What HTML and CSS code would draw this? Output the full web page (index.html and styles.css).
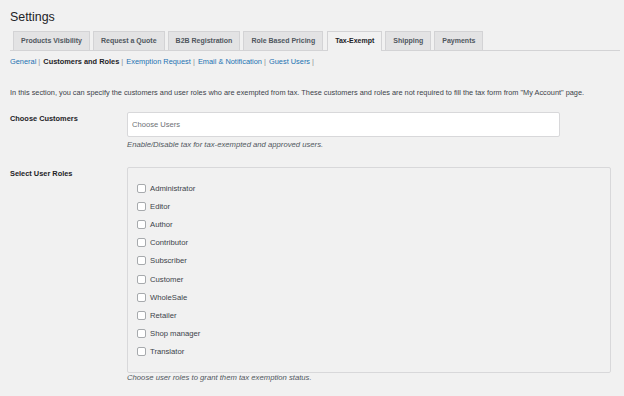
FILE: index.html
```html
<!DOCTYPE html>
<html lang="en">

<head>
    <meta charset="UTF-8">
    <meta name="viewport" content="width=device-width, initial-scale=1.0">
    <title>Settings</title>
    <link rel="stylesheet" href="styles.css">
</head>

<body>
    <div class="wrap">
        <h1>Settings</h1>
        <nav class="tabs">
            <a class="tab">Products Visibility</a>
            <a class="tab">Request a Quote</a>
            <a class="tab">B2B Registration</a>
            <a class="tab">Role Based Pricing</a>
            <a class="tab active">Tax-Exempt</a>
            <a class="tab">Shipping</a>
            <a class="tab">Payments</a>
        </nav>
        <ul class="subnav">
            <li><a href="#">General</a> | </li>
            <li><b>Customers and Roles</b> | </li>
            <li><a href="#">Exemption Request</a> | </li>
            <li><a href="#">Email &amp; Notification</a> | </li>
            <li><a href="#">Guest Users</a> | </li>
        </ul>

        <p class="intro">In this section, you can specify the customers and user roles who are exempted from tax. These customers and roles are not required to fill the tax form from "My Account" page.</p>

        <div class="row row-customers">
            <div class="label">Choose Customers</div>
            <div class="field">
                <input type="text" class="users-input" placeholder="Choose Users">
                <p class="help">Enable/Disable tax for tax-exempted and approved users.</p>
            </div>
        </div>

        <div class="row row-roles">
            <div class="label">Select User Roles</div>
            <div class="field">
                <div class="roles-box" id="roles"></div>
                <p class="help">Choose user roles to grant them tax exemption status.</p>
            </div>
        </div>
    </div>

    <script>
        const roles = ['Administrator', 'Editor', 'Author', 'Contributor', 'Subscriber',
            'Customer', 'WholeSale', 'Retailer', 'Shop manager', 'Translator'];
        const box = document.getElementById('roles');
        roles.forEach((role) => {
            const item = document.createElement('label');
            item.classList.add('role');
            item.innerHTML = `<input type="checkbox" class="role-check"><span>${role}</span>`;
            box.appendChild(item);
        });
    </script>
</body>

</html>
```

FILE: styles.css
```css
body {
    font-family: "Liberation Sans", Arial, sans-serif;
    margin: 0;
    background: #f1f1f1;
    color: #1d2327;
}

.wrap {
    padding: 9px 4px 0 10px;
}

h1 {
    font-size: 12.4px;
    font-weight: 400;
    line-height: 16px;
    margin: 0;
    color: #1d2327;
}

.tabs {
    display: flex;
    gap: 3px;
    margin-top: 6px;
    padding-left: 3px;
    border-bottom: 1px solid #d3d3d5;
    height: 19px;
}

.tab {
    display: block;
    height: 18px;
    line-height: 18px;
    padding: 0 7px;
    font-size: 7px;
    font-weight: 700;
    color: #50575e;
    background: #e3e3e4;
    border: 1px solid #d3d3d5;
    border-bottom: none;
}

.tab.active {
    background: #f1f1f1;
    color: #1d2327;
    height: 19px;
    margin-left: 1px;
}

.subnav {
    list-style: none;
    margin: 6px 0 0;
    padding: 0;
    display: flex;
    gap: 1px;
    font-size: 7.4px;
    line-height: 10px;
    color: #8c8f94;
}

.subnav li {
    white-space: pre;
}

.subnav a {
    color: #2271b1;
    text-decoration: none;
}

.subnav b {
    color: #1d2327;
}

.intro {
    font-size: 7.35px;
    line-height: 10px;
    color: #3c434a;
    margin: 21px 0 0;
    white-space: nowrap;
}

.row {
    display: flex;
}

.label {
    width: 117px;
    font-size: 7.4px;
    line-height: 10px;
    font-weight: 700;
    color: #1d2327;
    flex-shrink: 0;
    padding-top: 2px;
}

.field {
    flex-grow: 1;
}

.row-customers {
    margin-top: 14px;
}

.users-input {
    width: 433px;
    height: 25px;
    box-sizing: border-box;
    border: 1px solid #d8d8da;
    border-radius: 2px;
    background: #fff;
    padding: 0 4px;
    font-family: inherit;
    font-size: 7.6px;
    display: block;
}

.users-input::placeholder {
    color: #6d7075;
}

.help {
    font-size: 7.7px;
    line-height: 10px;
    font-style: italic;
    color: #50575e;
    margin: 3px 0 0;
}

.row-roles {
    margin-top: 17px;
}

.roles-box {
    width: 484px;
    height: 206px;
    box-sizing: border-box;
    border: 1px solid #d8d8da;
    border-radius: 2px;
    padding: 11px 9px 0;
}

.roles-box + .help {
    margin-top: 0;
}

.role {
    display: flex;
    align-items: center;
    height: 18.2px;
    font-size: 7.7px;
    color: #3c434a;
}

.role-check {
    appearance: none;
    width: 9px;
    height: 9px;
    margin: 0 4px 0 0;
    border: 1px solid #a7aaad;
    border-radius: 2px;
    background: #fff;
    box-sizing: border-box;
}
```
